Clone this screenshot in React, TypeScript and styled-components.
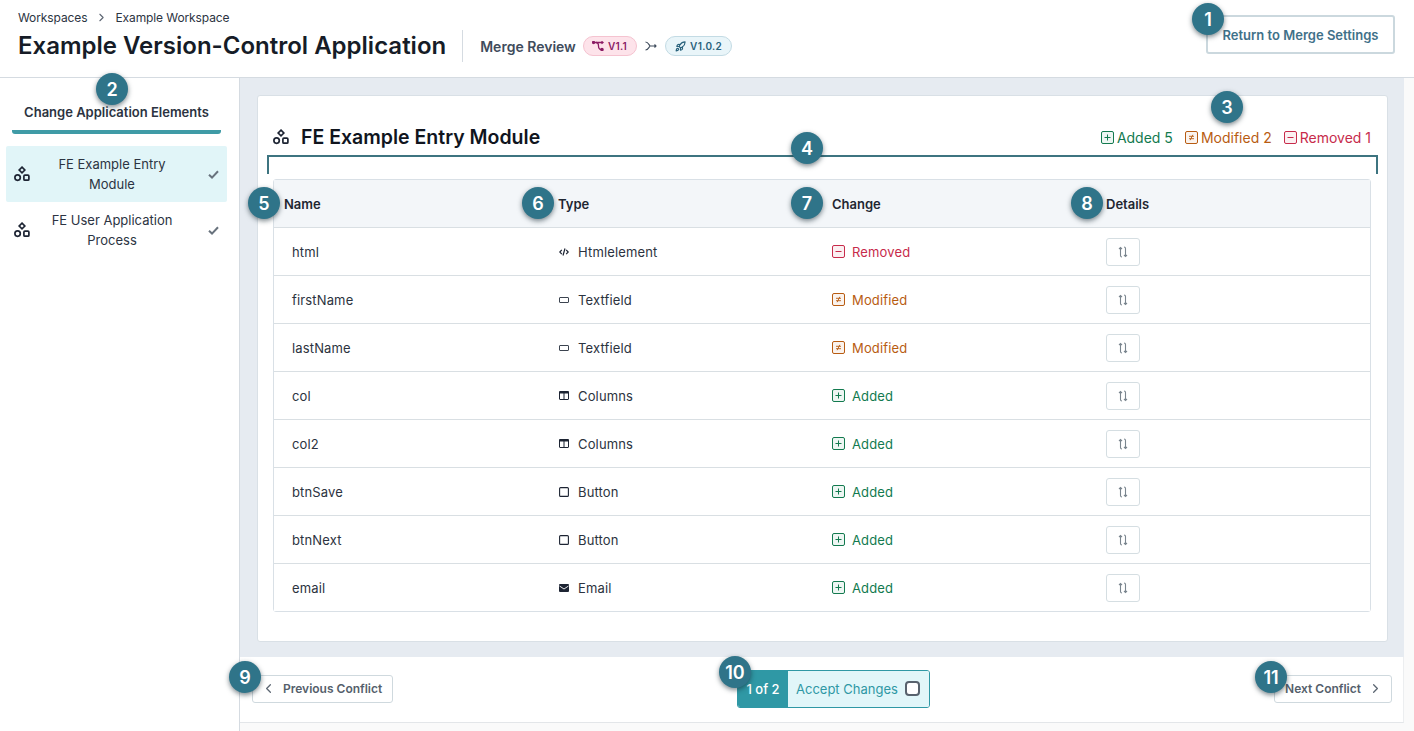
import React from 'react'
import styled, { createGlobalStyle } from 'styled-components'
import { LuChevronLeft, LuChevronRight, LuRocket } from 'react-icons/lu'

const GlobalStyle = createGlobalStyle`
  html, body {
    margin: 0;
    padding: 0;
    background: #fff;
    font-family: Inter, "Liberation Sans", sans-serif;
    color: #1d2433;
    overflow: hidden;
  }
  * { box-sizing: border-box; }
`

const Page = styled.div`
  position: relative;
  width: 1414px;
  height: 731px;
  overflow: hidden;
  display: flex;
  flex-direction: column;
`

const Header = styled.header`
  height: 78px;
  flex: none;
  display: flex;
  justify-content: space-between;
  border-bottom: 1px solid #d5dbe1;
  padding: 11px 19px 0 18px;
`

const Breadcrumb = styled.div`
  display: flex;
  align-items: center;
  gap: 7.5px;
  height: 12px;
  font-size: 12px;
  letter-spacing: -0.1px;
  color: #2c3442;
  svg { font-size: 13px; color: #5d6673; }
`

const TitleRow = styled.div`
  display: flex;
  align-items: center;
  margin-top: 7px;
`

const Title = styled.h1`
  margin: 0;
  font-size: 24px;
  line-height: 32px;
  font-weight: 600;
  color: #161c27;
  padding-right: 16px;
  border-right: 1px solid #d5dbe1;
  height: 32px;
  white-space: nowrap;
`

const MergeLabel = styled.span`
  margin: 0 7px 0 17px;
  font-size: 14px;
  font-weight: 600;
  color: #3f4c5c;
`

const VersionBadge = styled.span<{ $tone: 'pink' | 'blue' }>`
  display: inline-flex;
  align-items: center;
  gap: 4px;
  height: 20px;
  padding: 0 9px 0 ${p => (p.$tone === 'pink' ? '8px' : '9px')};
  border-radius: 10px;
  font-size: 10px;
  font-weight: 600;
  letter-spacing: 0.3px;
  background: ${p => (p.$tone === 'pink' ? '#fde3ea' : '#e9f5f9')};
  border: 1px solid ${p => (p.$tone === 'pink' ? '#f5c3d0' : '#c3dbe4')};
  color: ${p => (p.$tone === 'pink' ? '#8b1c64' : '#29627c')};
  svg { flex: none; }
`

const MergeArrow = styled.svg`
  margin: 0 8px;
`

const ReturnButton = styled.button`
  margin-top: 4px;
  width: 189px;
  height: 39px;
  background: #fff;
  border: 2px solid #cbd8de;
  border-radius: 3px;
  font: 600 13px Inter, sans-serif;
  color: #3f7189;
  padding: 0;
`

const Body = styled.div`
  flex: 1;
  display: flex;
  min-height: 0;
`

const Sidebar = styled.aside`
  width: 240px;
  flex: none;
  border-right: 1px solid #d5dbe1;
  padding: 0 12px 0 6px;
`

const SidebarTitle = styled.div`
  margin: 0 6px;
  height: 56px;
  padding-top: 26px;
  text-align: center;
  font-size: 13px;
  line-height: 16px;
  font-weight: 600;
  color: #2b3341;
  border-bottom: 4px solid #3f9ba6;
  border-radius: 0 0 3px 3px;
  white-space: nowrap;
`

const SideList = styled.div`
  margin-top: 12px;
`

const SideItem = styled.div<{ $active?: boolean }>`
  display: flex;
  align-items: center;
  height: 56px;
  padding: 0 8px;
  border-radius: 2px;
  background: ${p => (p.$active ? '#e1f5f8' : 'transparent')};
`

const SideLabel = styled.div`
  flex: 1;
  text-align: center;
  font-size: 13px;
  line-height: 20px;
  color: #2c3442;
  padding: 0 22px 0 8px;
`

const Content = styled.main`
  flex: 1;
  display: flex;
  flex-direction: column;
  min-width: 0;
  background: #fafafa;
`

const PanelArea = styled.div`
  width: 1164px;
  height: 579px;
  flex: none;
  background: #e6ebf1;
  padding: 17px 16px 0 17px;
`

const Panel = styled.section`
  height: 547px;
  background: #fff;
  border: 1px solid #d9e0e6;
  border-radius: 3px;
  padding: 29px 16px 0 15px;
`

const PanelHead = styled.div`
  display: flex;
  align-items: center;
  justify-content: space-between;
  height: 24px;
  margin-bottom: 30px;
`

const PanelTitle = styled.h2`
  margin: 0;
  display: flex;
  align-items: center;
  gap: 12px;
  font-size: 19.5px;
  font-weight: 600;
  color: #10151e;
`

const Counts = styled.div`
  display: flex;
  gap: 12px;
`

const Count = styled.span<{ $color: string }>`
  display: inline-flex;
  align-items: center;
  gap: 3px;
  font-size: 14px;
  color: ${p => p.$color};
`

const Table = styled.div`
  width: 1098px;
  border: 1px solid #d9e0e6;
  border-radius: 3px;
`

const Row = styled.div<{ $head?: boolean }>`
  display: grid;
  grid-template-columns: repeat(4, 274px);
  align-items: center;
  height: ${p => (p.$head ? '47px' : '48px')};
  padding-left: 10px;
  background: ${p => (p.$head ? '#f3f6f9' : '#fff')};
  border-top: ${p => (p.$head ? 'none' : '1px solid #d9dfe3')};
`

const HeadCell = styled.div`
  font-size: 13px;
  font-weight: 600;
  color: #1f2631;
`

const NameCell = styled.div`
  padding-left: 8px;
  font-size: 13px;
  letter-spacing: 0.15px;
  color: #2c3340;
`

const IconCell = styled.div<{ $color?: string; $gap?: number }>`
  display: flex;
  align-items: center;
  gap: ${p => p.$gap ?? 8}px;
  font-size: 13px;
  letter-spacing: 0.15px;
  color: ${p => p.$color ?? '#2c3340'};
`

const IconSlot = styled.span`
  width: 12px;
  display: flex;
  justify-content: center;
`

const DiffButton = styled.button`
  width: 34px;
  height: 28px;
  display: flex;
  align-items: center;
  justify-content: center;
  padding: 0;
  background: #fff;
  border: 1px solid #d5dee2;
  border-radius: 3px;
`

const Footer = styled.footer`
  width: 1164px;
  height: 66px;
  flex: none;
  background: #fff;
  border-bottom: 1px solid #e3e6e9;
  border-right: 1px solid #eceef0;
  display: flex;
  align-items: center;
  justify-content: space-between;
  padding: 0 11px 0 12px;
`

const NavButton = styled.button`
  display: flex;
  align-items: center;
  gap: 7px;
  height: 28px;
  background: #fff;
  border: 1px solid #cfd9de;
  border-radius: 3px;
  font: 600 12px Inter, sans-serif;
  color: #555f6c;
  padding: 0 8px;
  margin-bottom: 2px;
  svg { font-size: 15px; color: #5c6672; }
`

const PrevButton = styled(NavButton)`
  width: 141px;
`

const NextButton = styled(NavButton)`
  width: 118px;
  justify-content: flex-end;
`

const AcceptGroup = styled.div`
  display: flex;
  height: 38px;
  width: 193px;
  border: 1px solid #2f98a5;
  border-radius: 3px;
  overflow: hidden;
  margin-bottom: 2px;
`

const Counter = styled.div`
  width: 50px;
  background: #2f98a5;
  color: #fff;
  font-size: 13px;
  font-weight: 500;
  display: flex;
  align-items: center;
  justify-content: center;
`

const AcceptLabel = styled.label`
  flex: 1;
  background: #e1f6f9;
  color: #2f98a5;
  font-size: 13px;
  display: flex;
  align-items: center;
  justify-content: space-between;
  padding: 0 9px 0 8px;
`

const FakeCheckbox = styled.span`
  width: 15px;
  height: 15px;
  background: #fff;
  border: 2px solid #58626d;
  border-radius: 4px;
`

const Callout = styled.div<{ $x: number; $y: number }>`
  position: absolute;
  left: ${p => p.$x - 16}px;
  top: ${p => p.$y - 16}px;
  width: 32px;
  height: 32px;
  border-radius: 50%;
  background: #2f7489;
  color: #fff;
  font-size: 18px;
  font-weight: 600;
  display: flex;
  align-items: center;
  justify-content: center;
  box-shadow: 0 2px 5px rgba(20, 40, 50, 0.55);
`

const Bracket = styled.div`
  position: absolute;
  left: 267px;
  top: 155px;
  width: 1111px;
  height: 19px;
  border: 2px solid #3d7480;
  border-bottom: none;
`

const ModuleSvg = styled.svg`
  flex: none;
`

const ModuleIcon = () => (
  <ModuleSvg width="16" height="16" viewBox="0 0 16 16" fill="none" stroke="#1d2433" strokeWidth="1.7">
    <path d="M8 1.2 10.8 4 8 6.8 5.2 4Z" />
    <circle cx="3.6" cy="11.6" r="2.7" />
    <rect x="9.9" y="9.2" width="5" height="5" rx="1" />
  </ModuleSvg>
)

const CheckIcon = () => (
  <ModuleSvg width="11" height="11" viewBox="0 0 11 11" fill="none" stroke="#68727d" strokeWidth="2">
    <path d="M1 5.8 4 8.6 10 2.2" />
  </ModuleSvg>
)

const boxIcon = (color: string, inner: React.ReactNode) => (
  <ModuleSvg width="13" height="13" viewBox="0 0 13 13" fill="none">
    <rect x="0.5" y="0.5" width="12" height="12" rx="1.5" stroke={color} fill={color} fillOpacity="0.07" />
    {inner}
  </ModuleSvg>
)

const colors = { added: '#137a4f', modified: '#b85c12', removed: '#c72b4b' }

const AddedIcon = () =>
  boxIcon(colors.added, <path d="M6.5 3.5v6M3.5 6.5h6" stroke={colors.added} />)
const ModifiedIcon = () =>
  boxIcon(colors.modified, <path d="M4 5.3h5M4 7.7h5M7.8 3.800 5.200 9.200" stroke={colors.modified} strokeWidth="0.9" />)
const RemovedIcon = () =>
  boxIcon(colors.removed, <path d="M3.5 6.5h6" stroke={colors.removed} />)

const HtmlIcon = () => (
  <svg width="10" height="10" viewBox="0 0 10 10" fill="none" stroke="#1d2433" strokeWidth="1.2">
    <path d="M2.8 2.8.8 5l2 2.2M7.2 2.8l2 2.2-2 2.2M6 1.5 4 8.5" />
  </svg>
)
const TextfieldIcon = () => (
  <svg width="10" height="6" viewBox="0 0 10 6" fill="none" stroke="#3c4450">
    <rect x="0.5" y="0.5" width="9" height="5" rx="0.5" />
  </svg>
)
const ColumnsIcon = () => (
  <svg width="10" height="9" viewBox="0 0 10 9" fill="none" stroke="#1d2433">
    <rect x="0.5" y="0.5" width="9" height="8" rx="0.5" />
    <path d="M0 1.5h10" strokeWidth="2" />
    <path d="M5 1v8" />
  </svg>
)
const ButtonIcon = () => (
  <svg width="10" height="10" viewBox="0 0 10 10" fill="none" stroke="#1d2433" strokeWidth="1.1">
    <rect x="0.6" y="0.6" width="8.8" height="8.8" rx="1" />
  </svg>
)
const EmailIcon = () => (
  <svg width="10" height="8" viewBox="0 0 10 8">
    <rect width="10" height="8" rx="1" fill="#1d2433" />
    <path d="M0.5 2 5 5l4.5-3" fill="none" stroke="#fff" strokeWidth="0.9" />
  </svg>
)
const DiffIcon = () => (
  <svg width="12" height="12" viewBox="0 0 12 12" fill="none" stroke="#7a858e" strokeWidth="1.1">
    <path d="M5 11C4 11 3.5 10.5 3.5 9.5V1.5M2 3 3.500 1.500 5 3" />
    <path d="M7 1C8 1 8.5 1.5 8.5 2.5V10.5M7 9 8.5 10.5 10 9" />
  </svg>
)
const BranchIcon = () => (
  <svg width="12" height="10" viewBox="0 0 12 10" fill="none" stroke="#8b1c64" strokeWidth="1.3">
    <path d="M1.5 1.5H11M9.5.3 11 1.5 9.5 2.7" />
    <path d="M4 1.5C6 1.5 6.5 3 6.5 5 6.5 7.5 7.5 8.5 9.5 8.5" />
    <circle cx="1.5" cy="1.5" r="1" fill="#8b1c64" />
    <circle cx="10" cy="8.5" r="1.1" fill="#8b1c64" />
  </svg>
)

type Change = 'Added' | 'Modified' | 'Removed'
type Kind = 'Htmlelement' | 'Textfield' | 'Columns' | 'Button' | 'Email'

const kindIcons: Record<Kind, React.ReactNode> = {
  Htmlelement: <HtmlIcon />,
  Textfield: <TextfieldIcon />,
  Columns: <ColumnsIcon />,
  Button: <ButtonIcon />,
  Email: <EmailIcon />,
}

const changeStyles: Record<Change, { color: string; icon: React.ReactNode }> = {
  Added: { color: colors.added, icon: <AddedIcon /> },
  Modified: { color: colors.modified, icon: <ModifiedIcon /> },
  Removed: { color: colors.removed, icon: <RemovedIcon /> },
}

const rows: { name: string; kind: Kind; change: Change }[] = [
  { name: 'html', kind: 'Htmlelement', change: 'Removed' },
  { name: 'firstName', kind: 'Textfield', change: 'Modified' },
  { name: 'lastName', kind: 'Textfield', change: 'Modified' },
  { name: 'col', kind: 'Columns', change: 'Added' },
  { name: 'col2', kind: 'Columns', change: 'Added' },
  { name: 'btnSave', kind: 'Button', change: 'Added' },
  { name: 'btnNext', kind: 'Button', change: 'Added' },
  { name: 'email', kind: 'Email', change: 'Added' },
]

const callouts = [
  [1208, 19], [112, 89], [1227, 107], [807, 148], [264, 203], [538, 203],
  [807, 203], [1087, 203], [245, 677], [735, 672], [1271, 677],
]

const App = () => {
  return (
    <Page>
      <GlobalStyle />
      <Header>
        <div>
          <Breadcrumb>
            <span>Workspaces</span>
            <LuChevronRight />
            <span>Example Workspace</span>
          </Breadcrumb>
          <TitleRow>
            <Title>Example Version-Control Application</Title>
            <MergeLabel>Merge Review</MergeLabel>
            <VersionBadge $tone="pink">
              <BranchIcon />V1.1
            </VersionBadge>
            <MergeArrow width="12" height="10" viewBox="0 0 12 10" fill="none" stroke="#3f4c5c" strokeWidth="1.1">
              <path d="M.5 1C3 1 3.5 3 5 5 3.5 7 3 9 .5 9M5 5H11M9.5 3.5 11 5 9.5 6.5" />
            </MergeArrow>
            <VersionBadge $tone="blue">
              <LuRocket size={11} strokeWidth={2.5} />V1.0.2
            </VersionBadge>
          </TitleRow>
        </div>
        <ReturnButton>Return to Merge Settings</ReturnButton>
      </Header>
      <Body>
        <Sidebar>
          <SidebarTitle>Change Application Elements</SidebarTitle>
          <SideList>
            <SideItem $active>
              <ModuleIcon />
              <SideLabel>FE Example Entry Module</SideLabel>
              <CheckIcon />
            </SideItem>
            <SideItem>
              <ModuleIcon />
              <SideLabel>FE User Application Process</SideLabel>
              <CheckIcon />
            </SideItem>
          </SideList>
        </Sidebar>
        <Content>
          <PanelArea>
            <Panel>
              <PanelHead>
                <PanelTitle>
                  <ModuleIcon />
                  FE Example Entry Module
                </PanelTitle>
                <Counts>
                  <Count $color={colors.added}><AddedIcon />Added 5</Count>
                  <Count $color={colors.modified}><ModifiedIcon />Modified 2</Count>
                  <Count $color={colors.removed}><RemovedIcon />Removed 1</Count>
                </Counts>
              </PanelHead>
              <Table>
                <Row $head>
                  <HeadCell>Name</HeadCell>
                  <HeadCell>Type</HeadCell>
                  <HeadCell>Change</HeadCell>
                  <HeadCell>Details</HeadCell>
                </Row>
                {rows.map(row => (
                  <Row key={row.name}>
                    <NameCell>{row.name}</NameCell>
                    <IconCell><IconSlot>{kindIcons[row.kind]}</IconSlot>{row.kind}</IconCell>
                    <IconCell $gap={7} $color={changeStyles[row.change].color}>
                      {changeStyles[row.change].icon}
                      <span>{row.change}</span>
                    </IconCell>
                    <div><DiffButton><DiffIcon /></DiffButton></div>
                  </Row>
                ))}
              </Table>
            </Panel>
          </PanelArea>
          <Footer>
            <PrevButton><LuChevronLeft />Previous Conflict</PrevButton>
            <AcceptGroup>
              <Counter>1 of 2</Counter>
              <AcceptLabel>Accept Changes<FakeCheckbox /></AcceptLabel>
            </AcceptGroup>
            <NextButton>Next Conflict<LuChevronRight /></NextButton>
          </Footer>
        </Content>
      </Body>
      <Bracket />
      {callouts.map(([x, y], i) => (
        <Callout key={i} $x={x} $y={y}>{i + 1}</Callout>
      ))}
    </Page>
  )
}

export default App
